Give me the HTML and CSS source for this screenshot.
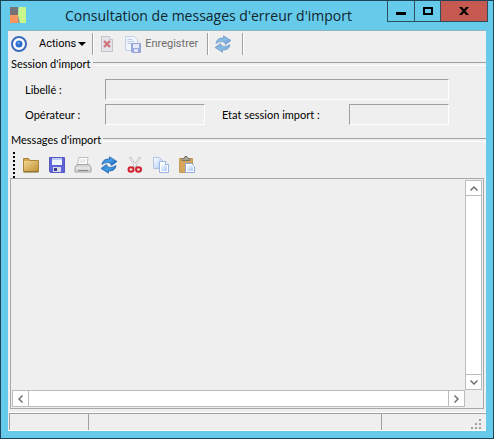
FILE: index.html
```
<!DOCTYPE html>
<html lang="fr">
<head>
    <meta charset="UTF-8">
    <meta name="viewport" content="width=device-width, initial-scale=1.0">
    <title>Consultation de messages d'erreur d'import</title>
    <link rel="stylesheet" href="styles.css">
</head>
<body>
    <!-- Shared icons -->
    <svg class="sprite" aria-hidden="true">
        <defs>
            <linearGradient id="folderFill" x1="0" y1="0" x2="1" y2="1">
                <stop offset="0" stop-color="#f3d68e"/>
                <stop offset="1" stop-color="#c29238"/>
            </linearGradient>
            <linearGradient id="blueFill" x1="0" y1="0" x2="1" y2="1">
                <stop offset="0" stop-color="#2a78cc"/>
                <stop offset=".5" stop-color="#3f9ee4"/>
                <stop offset="1" stop-color="#1450b4"/>
            </linearGradient>
            <linearGradient id="pageFill" x1="0" y1="0" x2="1" y2="1">
                <stop offset="0" stop-color="#ffffff"/>
                <stop offset="1" stop-color="#a9c8f8"/>
            </linearGradient>
            <symbol id="refresh" viewBox="0 0 18 18">
                <path d="M2 8.500C2.500 4.500 5.500 2.500 9.500 3.200L9.500 .800L17 5.500L11.500 9.500L10.500 7.300C7.500 6 5 6.500 2 8.500Z" fill="url(#blueFill)" stroke="#1d57a4" stroke-width=".7"/>
                <path d="M16 9.500C15.500 13.500 12.500 15.500 8.500 14.800L8.500 17.200L1 12.500L6.500 8.500L7.500 10.700C10.500 12 13 11.500 16 9.500Z" fill="url(#blueFill)" stroke="#1d57a4" stroke-width=".7"/>
            </symbol>
        </defs>
    </svg>

    <div class="window">
        <header class="title-bar">
            <svg class="app-icon" viewBox="0 0 16 16">
                <rect width="8" height="8" fill="#777276"/>
                <rect y="8" width="8" height="8" fill="#fb9560"/>
                <path d="M8 8h2v8H8z" fill="#8a9a92"/>
                <path d="M9 0h7v16h-6L8 8z" fill="#c8f58c"/>
            </svg>
            <h1 class="title">Consultation de messages d'erreur d'import</h1>
            <div class="window-buttons">
                <button type="button" class="window-btn minimize" aria-label="Réduire">
                    <svg width="10" height="3"><rect width="10" height="3"/></svg>
                </button>
                <button type="button" class="window-btn maximize" aria-label="Agrandir">
                    <svg width="10" height="8"><rect x="1" y="1" width="8" height="6" fill="none" stroke="#000" stroke-width="2"/></svg>
                </button>
                <button type="button" class="window-btn close" aria-label="Fermer">
                    <svg width="10" height="8"><path d="M0 0h3l2 2.500 2-2.500h3l-3.500 4L10 8H7L5 5.500 3 8H0l3.500-4z"/></svg>
                </button>
            </div>
        </header>

        <main class="content">
            <div class="toolbar">
                <button type="button" class="tool target-btn" aria-label="Cible">
                    <svg width="18" height="18" viewBox="0 0 18 18">
                        <circle cx="9" cy="9" r="7" fill="#fff" stroke="#3b6cbc" stroke-width="2"/>
                        <circle cx="9" cy="9" r="3.500" fill="#2c6fd0"/>
                        <circle cx="8.500" cy="8" r="1.200" fill="#73a9ee"/>
                    </svg>
                </button>
                <button type="button" class="tool actions-btn">Actions <span class="arrow"></span></button>
                <span class="separator"></span>
                <button type="button" class="tool delete-btn" aria-label="Supprimer" disabled>
                    <svg width="16" height="16" viewBox="0 0 16 16">
                        <path d="M2.500 .5h8l3 3v12h-11z" fill="#e4e4ea" stroke="#c3c3ca"/>
                        <path d="M10.500 .5v3h3" fill="#fff" stroke="#c3c3ca"/>
                        <path d="M5 5l6 6M11 5l-6 6" stroke="#cf7479" stroke-width="2.400"/>
                    </svg>
                </button>
                <button type="button" class="tool save-btn" disabled>
                    <svg width="16" height="17" viewBox="0 0 16 17">
                        <path d="M.5 .5h9l3 3v11h-12z" fill="#f0f4fc" stroke="#c6d1e8"/>
                        <path d="M2.500 3.500h5M2.500 5.500h7M2.500 7.500h4" stroke="#bccbe8"/>
                        <path d="M6.500 7.500h9v9h-8l-1-1z" fill="#9aa8e0" stroke="#97a2d4"/>
                        <path d="M8 8h6v4H8z" fill="#e4e9f8"/>
                        <path d="M9 13h4v3H9z" fill="#dfe3f1"/>
                    </svg>
                    Enregistrer
                </button>
                <span class="separator"></span>
                <button type="button" class="tool refresh-btn" aria-label="Actualiser" disabled>
                    <svg width="18" height="18"><use href="#refresh"/></svg>
                </button>
                <span class="separator"></span>
            </div>

            <section class="group">
                <h2 class="group-title">Session d'import</h2>
                <div class="fields">
                    <label for="libelle">Libellé :</label>
                    <input type="text" id="libelle" class="field wide" readonly>
                    <label for="operateur">Opérateur :</label>
                    <input type="text" id="operateur" class="field" readonly>
                    <label for="etat" class="second-label">Etat session import :</label>
                    <input type="text" id="etat" class="field" readonly>
                </div>
            </section>

            <section class="group messages">
                <h2 class="group-title">Messages d'import</h2>
                <div class="edit-bar">
                    <span class="grip"></span>
                    <button type="button" class="tool" aria-label="Ouvrir">
                        <svg width="18" height="18" viewBox="0 0 18 18">
                            <path d="M1.500 15.500v-13h5l1.500 2h8.500v11z" fill="#d7a647" stroke="#a8853c"/>
                            <path d="M2 5h14v10H2z" fill="url(#folderFill)"/>
                            <path d="M1.500 16h15" stroke="#7e6128"/>
                        </svg>
                    </button>
                    <button type="button" class="tool" aria-label="Enregistrer">
                        <svg width="18" height="18" viewBox="0 0 18 18">
                            <path d="M1.500 1.500h15v15h-14l-1-1z" fill="#5e63d8" stroke="#5558c0"/>
                            <path d="M4 2h10v7H4z" fill="#edf2ff"/>
                            <path d="M4 2h10v2H4z" fill="#bfcdf5"/>
                            <path d="M5 11h8v5H5z" fill="#d7d9e8"/>
                            <path d="M6 12h3v3H6z" fill="#38398e"/>
                        </svg>
                    </button>
                    <button type="button" class="tool" aria-label="Imprimer">
                        <svg width="18" height="18" viewBox="0 0 18 18">
                            <path d="M5 1.500h9l-1 8H3.500z" fill="#fff" stroke="#bcbcbc"/>
                            <path d="M6 4h6M6 6h5" stroke="#d8d8d8"/>
                            <path d="M3 8.500h12l2 3v4.500H1v-4.500z" fill="#d4d4d2" stroke="#a6a6a4"/>
                            <path d="M2 12h14" stroke="#f5f5f5"/>
                            <path d="M4 14.500h10" stroke="#8d8d8d"/>
                        </svg>
                    </button>
                    <button type="button" class="tool" aria-label="Actualiser">
                        <svg width="18" height="18"><use href="#refresh"/></svg>
                    </button>
                    <button type="button" class="tool" aria-label="Couper">
                        <svg width="18" height="18" viewBox="0 0 18 18">
                            <path d="M4 1.500L11 12M14 1.500L7 12" stroke="#a8a8a8" stroke-width="2.200"/>
                            <path d="M4.300 2L10 10.500M13.700 2L8 10.500" stroke="#f6f6f6" stroke-width="1.200"/>
                            <ellipse cx="5" cy="13.500" rx="2.500" ry="2.300" fill="#f6dada" stroke="#cf2230" stroke-width="2"/>
                            <ellipse cx="12.500" cy="13.500" rx="2.500" ry="2.300" fill="#f6dada" stroke="#cf2230" stroke-width="2"/>
                        </svg>
                    </button>
                    <button type="button" class="tool" aria-label="Copier">
                        <svg width="18" height="18" viewBox="0 0 18 18">
                            <path d="M1.500 1.500h6l3 3v8h-9z" fill="url(#pageFill)" stroke="#b3c3e4"/>
                            <path d="M7.500 5.500h6l3 3v8h-9z" fill="#fff" stroke="#9fb5e0"/>
                            <path d="M9 8h4l2 2v5H9z" fill="url(#pageFill)"/>
                            <path d="M13.500 5.500v3h3" fill="#fff" stroke="#9fb5e0"/>
                        </svg>
                    </button>
                    <button type="button" class="tool" aria-label="Coller">
                        <svg width="18" height="18" viewBox="0 0 18 18">
                            <path d="M1.500 2.500h13v14h-13z" fill="#d5a65b" stroke="#c39a56"/>
                            <path d="M4 4.500v-2h2L7 .5h2l1 2h2v2z" fill="#a8a394" stroke="#7d796c"/>
                            <path d="M7.500 7.500h6l3 3v6h-9z" fill="#fff" stroke="#8faadd"/>
                            <path d="M9 9h4l2 2v4H9z" fill="url(#pageFill)"/>
                        </svg>
                    </button>
                </div>

                <div class="message-box">
                    <textarea class="message-text" aria-label="Messages d'import" readonly></textarea>
                    <div class="scrollbar vertical">
                        <button type="button" class="scroll-btn" aria-label="Haut">
                            <svg width="8" height="5"><path d="M.5 4.500L4 1l3.500 3.500"/></svg>
                        </button>
                        <button type="button" class="scroll-btn" aria-label="Bas">
                            <svg width="8" height="5"><path d="M.5 .5L4 4 7.500 .5"/></svg>
                        </button>
                    </div>
                    <div class="scrollbar horizontal">
                        <button type="button" class="scroll-btn" aria-label="Gauche">
                            <svg width="5" height="8"><path d="M4.500 .5L1 4l3.500 3.500"/></svg>
                        </button>
                        <button type="button" class="scroll-btn" aria-label="Droite">
                            <svg width="5" height="8"><path d="M.5 .5L4 4 .5 7.500"/></svg>
                        </button>
                    </div>
                </div>
            </section>

            <footer class="status-bar">
                <span class="status-cell"></span>
                <span class="status-cell"></span>
                <span class="status-cell last">
                    <svg width="11" height="11" fill="#a0a0a0">
                        <path d="M8 0h2v2H8zM4 4h2v2H4zM8 4h2v2H8zM0 8h2v2H0zM4 8h2v2H4zM8 8h2v2H8z"/>
                    </svg>
                </span>
            </footer>
        </main>
    </div>
</body>
</html>
```
FILE: styles.css
```
/* General styles */
* {
    margin: 0;
    padding: 0;
    box-sizing: border-box;
}

body {
    font-family: Lato, Arial, sans-serif;
    font-size: 11px;
    line-height: 14px;
    color: #000;
}

button {
    border: none;
    background: none;
    font: inherit;
    color: inherit;
}

svg {
    display: block;
    flex: none;
}

.sprite {
    position: absolute;
    width: 0;
    height: 0;
}

/* Window frame */
.window {
    display: flex;
    flex-direction: column;
    min-height: 100vh;
    padding: 0 7px 7px;
    border: 1px solid #1d4456;
    background: #66caea;
}

.title-bar {
    display: flex;
    height: 29px;
}

.app-icon {
    width: 16px;
    height: 16px;
    margin: 6px 0 0 2px;
}

.title {
    flex: 1;
    padding: 5px 0 0 4px;
    font-family: "Open Sans", "Segoe UI", sans-serif;
    font-size: 14px;
    font-weight: normal;
    line-height: 20px;
    text-align: center;
    white-space: nowrap;
    color: #10252e;
}

.window-buttons {
    display: flex;
    height: 21px;
    margin-right: -2px;
    border: 1px solid #2b4f5d;
    border-top: none;
}

.window-btn {
    display: flex;
    align-items: center;
    justify-content: center;
    width: 27px;
    border-right: 1px solid #2b4f5d;
}

.window-btn.minimize {
    padding-top: 4px;
}

.window-btn.maximize {
    width: 26px;
}

.window-btn.close {
    width: 46px;
    border-right: none;
    background: #c75a50;
}

.content {
    display: flex;
    flex: 1;
    flex-direction: column;
    border-top: 1px solid #8fb4c0;
    background: #efefef;
}

/* Main toolbar */
.toolbar {
    display: flex;
    align-items: center;
    height: 26px;
    padding-left: 2px;
    font-family: Roboto, Tahoma, sans-serif;
}

.tool {
    display: flex;
    align-items: center;
    gap: 4px;
}

.actions-btn {
    gap: 2px;
    margin: 0 6px 0 11px;
}

.arrow {
    border: 4px solid transparent;
    border-top-color: #000;
    border-bottom: none;
}

.separator {
    width: 2px;
    height: 22px;
    border-left: 1px solid #a0a0a0;
    border-right: 1px solid #fff;
}

.delete-btn {
    margin: 0 10px 0 5px;
}

.save-btn {
    margin-right: 9px;
    color: #6d6d6d;
}

.refresh-btn {
    margin: 0 10px 0 5px;
    opacity: 0.6;
}

/* Groups */
.group-title {
    display: flex;
    align-items: center;
    gap: 2px;
    padding-left: 3px;
    font-size: 11px;
    font-weight: normal;
}

.group-title::after {
    content: "";
    flex: 1;
    height: 2px;
    border-top: 1px solid #a0a0a0;
    border-bottom: 1px solid #fff;
}

.fields {
    display: grid;
    grid-template-columns: 80px 100px 1fr 100px;
    gap: 4px 0;
    align-items: center;
    padding: 8px 37px 8px 17px;
}

.second-label {
    padding-left: 17px;
}

.field {
    width: 100%;
    height: 21px;
    padding: 0 3px;
    border: 1px solid;
    border-color: #a0a0a0 #fff #fff #a0a0a0;
    background: #efefef;
    font: inherit;
}

.field.wide {
    grid-column: 2 / -1;
}

/* Messages */
.messages {
    display: flex;
    flex: 1;
    flex-direction: column;
}

.edit-bar {
    display: flex;
    align-items: center;
    gap: 8px;
    height: 31px;
    padding: 5px 0 0 4px;
}

.grip {
    align-self: stretch;
    width: 3px;
    border-right: 2px dotted #000;
}

.edit-bar .grip + .tool {
    margin-left: -1px;
}

.message-box {
    display: grid;
    flex: 1;
    grid-template: 1fr 17px / 1fr 17px;
    margin: 0 2px 3px;
    padding: 1px;
    border: 1px solid #a8a8a8;
}

.message-text {
    width: 100%;
    height: 100%;
    border: none;
    background: #efefef;
    font: inherit;
    resize: none;
}

.scrollbar {
    display: flex;
    justify-content: space-between;
    border: 1px solid #bcbcbc;
    background: #fff;
}

.scrollbar.vertical {
    flex-direction: column;
}

.scroll-btn {
    display: flex;
    align-items: center;
    justify-content: center;
    width: 15px;
    height: 15px;
}

.scroll-btn path {
    fill: none;
    stroke: #707070;
    stroke-width: 1.5;
}

.vertical .scroll-btn:first-child {
    border-bottom: 1px solid #bcbcbc;
}

.vertical .scroll-btn:last-child {
    border-top: 1px solid #bcbcbc;
}

.horizontal .scroll-btn {
    width: 16px;
}

.horizontal .scroll-btn:first-child {
    border-right: 1px solid #bcbcbc;
}

.horizontal .scroll-btn:last-child {
    border-left: 1px solid #bcbcbc;
}

/* Status bar */
.status-bar {
    display: grid;
    grid-template-columns: 79px 1fr 105px;
    height: 19px;
    padding-left: 1px;
    border-top: 1px solid #fff;
    border-bottom: 1px solid #fff;
}

.status-cell {
    border-top: 1px solid #a0a0a0;
    border-left: 1px solid #a0a0a0;
}

.status-cell.last {
    display: flex;
    align-items: flex-end;
    justify-content: flex-end;
    padding: 0 4px 0 0;
}
```
